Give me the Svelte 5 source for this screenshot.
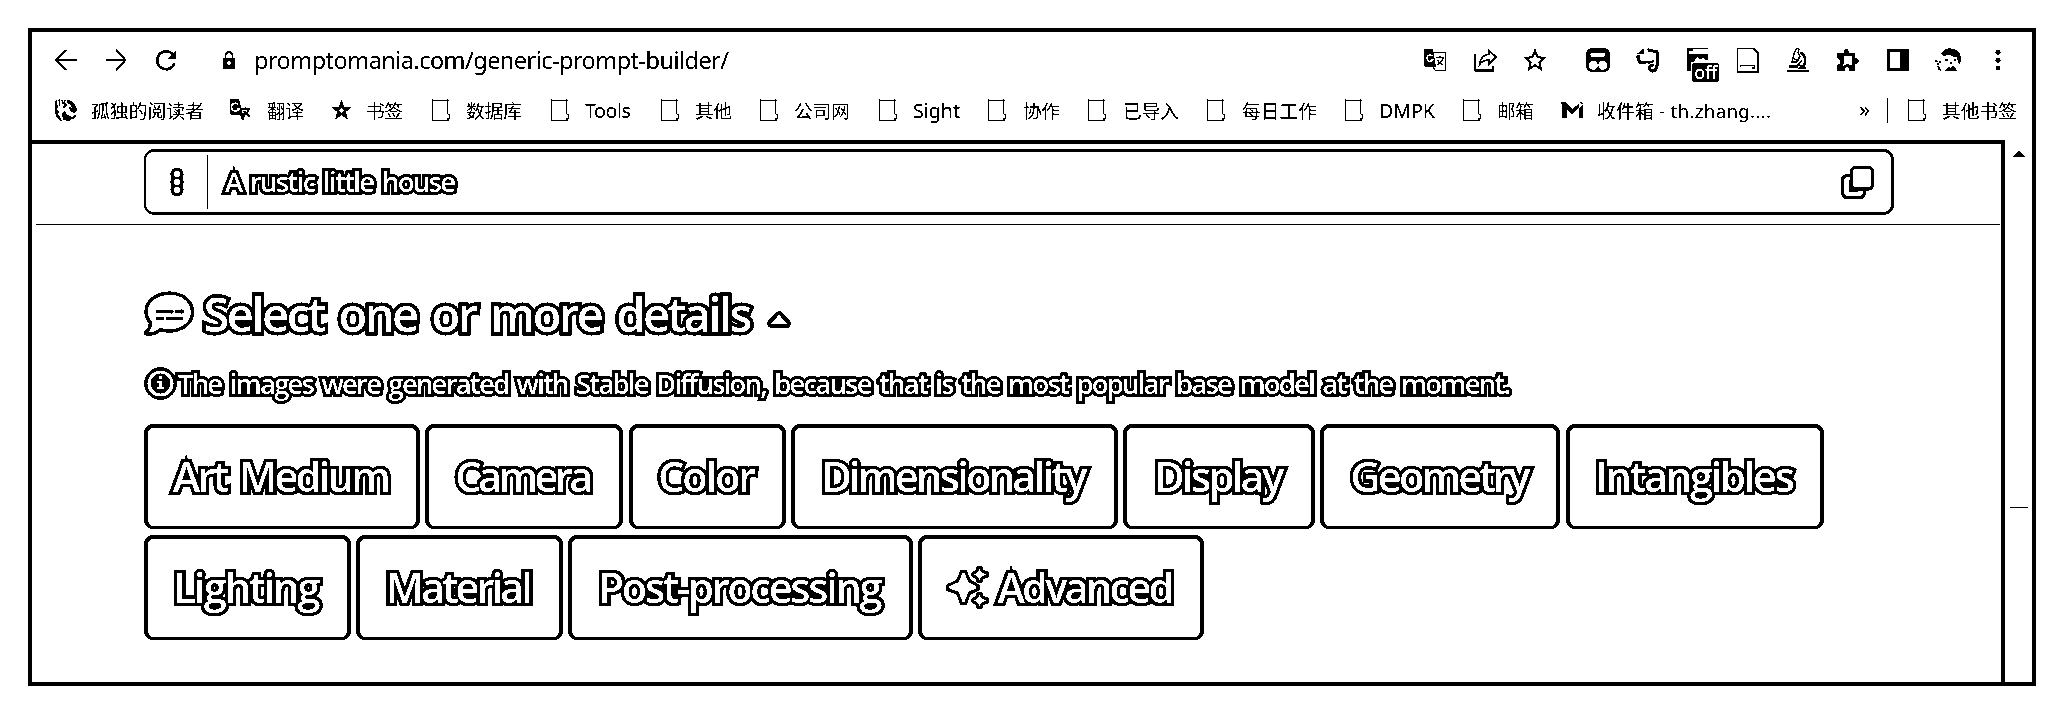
<script>
  // Spread a label over a given width with letter-spacing.
  function fit(node, width) {
    if (!width) return;
    const n = [...node.textContent].length;
    const natural = node.getBoundingClientRect().width;
    const ls = (width - natural) / (n - 1);
    node.style.letterSpacing = ls + 'px';
    node.style.marginRight = -ls + 'px';
  }

  const bookmarks = [
    { icon: 'reader', label: '孤独的阅读者', w: 175, t: 113, pad: 37 },
    { icon: 'translate', label: '翻译', w: 101, t: 37, pad: 38 },
    { icon: 'star', label: '书签', w: 101, t: 37, pad: 36 },
    { icon: 'folder', label: '数据库', w: 119, t: 56, pad: 35 },
    { icon: 'folder', label: 'Tools', w: 110, t: 46, pad: 35, latin: true },
    { icon: 'folder', label: '其他', w: 99, t: 37, pad: 35 },
    { icon: 'folder', label: '公司网', w: 119, t: 56, pad: 35 },
    { icon: 'folder', label: 'Sight', w: 109, t: 47, pad: 35, latin: true },
    { icon: 'folder', label: '协作', w: 100, t: 37, pad: 36 },
    { icon: 'folder', label: '已导入', w: 119, t: 56, pad: 36 },
    { icon: 'folder', label: '每日工作', w: 138, t: 75, pad: 36 },
    { icon: 'folder', label: 'DMPK', w: 118, t: 56, pad: 35, latin: true },
    { icon: 'folder', label: '邮箱', w: 98, t: 37, pad: 35 },
    { icon: 'gmail', label: '收件箱 - th.zhang....', w: 299, t: 174, pad: 37 }
  ];

  const rows = [
    [
      { label: 'Art Medium', w: 276.5, t: 218 },
      { label: 'Camera', w: 198, t: 138 },
      { label: 'Color', w: 157, t: 98 },
      { label: 'Dimensionality', w: 327, t: 266 },
      { label: 'Display', w: 192, t: 130 },
      { label: 'Geometry', w: 240, t: 180 },
      { label: 'Intangibles', w: 258.5, t: 200 }
    ],
    [
      { label: 'Lighting', w: 207, t: 147 },
      { label: 'Material', w: 207, t: 147 },
      { label: 'Post-processing', w: 345, t: 284 },
      { label: 'Advanced', w: 286, t: 177, sparkle: true }
    ]
  ];
</script>

{#snippet folder()}
  <svg width="20" height="24" viewBox="0 0 20 24" fill="none" stroke="#000" shape-rendering="crispEdges">
    <path d="M1.500 2v20.500h16M1 2.500h17M1.500 1v2M16.500 1v15" />
    <path d="M16.500 16.500h2v4h-1v2M16.500 20v2" />
  </svg>
{/snippet}

<svg class="defs" width="0" height="0" aria-hidden="true">
  <filter id="ink" color-interpolation-filters="sRGB" x="0" y="0" width="100%" height="100%">
    <feComponentTransfer>
      <feFuncR type="discrete" tableValues="0 0 0 0 0 1 1 1 1" />
      <feFuncG type="discrete" tableValues="0 0 0 0 0 1 1 1 1" />
      <feFuncB type="discrete" tableValues="0 0 0 0 0 1 1 1 1" />
    </feComponentTransfer>
  </filter>
</svg>

<div class="page">
  <div class="frame">
    <div class="toolbar">
      <div class="nav">
        <span class="cell"><svg width="24" height="24" viewBox="0 0 24 24" fill="none" stroke="#000" stroke-width="2.200"><path d="M12 2 2.500 12 12 22M2.500 12H23" /></svg></span>
        <span class="cell"><svg width="24" height="24" viewBox="0 0 24 24" fill="none" stroke="#000" stroke-width="2"><path d="m12 2 9.500 10L12 22M21.500 12H2" /></svg></span>
        <span class="cell"><svg width="24" height="24" viewBox="0 0 24 24" fill="none" stroke="#000" stroke-width="2.500"><path d="M20.500 15.500A9 9 0 1 1 19 6.500" /><path d="M22.300 2v8.500H13.800z" fill="#000" stroke="none" /></svg></span>
      </div>
      <svg class="lock" width="14" height="20" viewBox="0 0 14 20"><path d="M1 8h12v11H1z" /><path d="M3.500 8.500V5.500a3.500 3.500 0 0 1 7 0v3" fill="none" stroke="#000" stroke-width="1.800" /><circle cx="7" cy="13" r="1.800" fill="#fff" /></svg>
      <span class="url" use:fit={475}>promptomania.com/generic-prompt-builder/</span>
      <div class="actions">
        <span class="cell"><svg width="24" height="24" viewBox="0 0 24 24"><path d="M2 1h8l3 18H2.500L1 17V2z" /><path d="M11 4.500h11.500v18H12l-2-4" fill="none" stroke="#000" /><path d="M9.500 8A3.200 3.200 0 1 0 10 11.500H7.500" fill="none" stroke="#fff" stroke-width="1.500" /><path d="M13 9.500h8M17 7.500v2M20 10c-1 4-4 6-6 7M14.500 12c1 2 3 4 5 5" fill="none" stroke="#000" stroke-width="1.300" /></svg></span>
        <span class="cell"><svg width="26" height="26" viewBox="0 0 26 26" fill="none" stroke="#000"><path d="M3 7v17" stroke-width="1.400" /><path d="M2.500 23.500h18.500V19" stroke-width="2" /><path d="M17 3.500 24 10l-7 7v-4c-4 0-7 1-9.500 4.500C8 12 11 8 17 7z" stroke-width="1.700" /></svg></span>
        <span class="cell"><svg width="24" height="24" viewBox="0 0 24 24" fill="none" stroke="#000" stroke-width="1.900"><path d="m12 2.800 2.600 6.500 7 .5-5.300 4.500 1.700 6.800L12 17.300 6 21.100l1.700-6.800L2.400 9.800l7-.5z" /></svg></span>
        <span class="gap"></span>
        <span class="cell"><svg width="24" height="24" viewBox="0 0 24 24"><rect width="24" height="24" rx="6" /><rect x="4.500" y="4.800" width="14.500" height="4" rx="1.500" fill="#fff" /><circle cx="7.300" cy="17.300" r="4.600" fill="#fff" /><circle cx="16.900" cy="17.300" r="4.600" fill="#fff" /></svg></span>
        <span class="cell"><svg width="24" height="26" viewBox="0 0 24 26" fill="none" stroke="#000"><path d="M11.500 3.200c3-.8 4 1.300 9.500 1.600 1 4 .8 9 0 13.500-.5 4-1.500 5.700-4 5.700-2.500 0-4-1.500-3.500-4 .5-2 2-2 4-1.800" stroke-width="3" /><path d="M2.500 8c-1 3 0 5.500 1.500 7 2 1 4.500 1.200 6-.5" stroke-width="3.200" /><path d="M10 14.500c2 1.500 5 1.500 8-1" stroke-width="2" /><path d="M1 7 7.500 1v6z" fill="#000" stroke="none" /></svg></span>
        <span class="cell ext"><svg width="24" height="26" viewBox="0 0 24 26"><path d="M1 1h6v3H3v3h19v6H9l-1 2H5v9H1z" /><path d="M6 1.500h16" stroke="#000" /><path d="m8 13 4-3 2 2 3-1 4 3z" fill="#fff" /></svg><span class="badge">off</span></span>
        <span class="cell"><svg width="24" height="26" viewBox="0 0 24 26" fill="none" stroke="#000"><path d="M1.500 1v23.500M1 1.500h16.500" /><path d="M17.500 1.500 22 6v19" stroke-width="1.500" /><path d="M1 25h21.500" stroke-width="2" /><path d="M4.500 20V18.500h14v3M15.500 21h3" stroke-width="1.200" /></svg></span>
        <span class="cell"><svg width="24" height="26" viewBox="0 0 24 26" fill="none" stroke="#000"><path d="M1 24h22" stroke-width="2.500" /><path d="M3 19.500h9" stroke-width="2" /><path d="M6 15 8.500 5 11 1l2 1-1 4 2 3-3 6zM8 12l4 1" stroke-width="1.300" /><path d="M14 5.500c6 2.500 7.500 11 1 15.500h5" stroke-width="2.500" /><path d="m16 13-4 5 6 2" stroke-width="1.400" /></svg></span>
        <span class="cell"><svg width="24" height="24" viewBox="0 0 24 24"><path d="M1 5h7V3.500a2 2 0 0 1 4.500-1V5h6.500v5.500h2l2 2.500-2 2.500h-2V23h-6v-3a2.500 2.500 0 0 0-4 0v3H1.500v-6l3-2v-2l-3-2.500z" /><path d="M7.500 8h8.500v9.500l-4.500-1.500-4.500 2 1-4z" fill="#fff" /></svg></span>
        <span class="cell"><svg width="24" height="24" viewBox="0 0 24 24"><path d="M1 1h22v22H1z" /><path d="M4 3.500h10.500v17H4z" fill="#fff" /></svg></span>
        <span class="cell"><svg width="28" height="26" viewBox="0 0 28 26"><path d="M7 7c2-5 9-7 15-4 4 2 6 7 4 14l-2-2-1-5c-3 1-5-2-8-2-2 0-4 1-6 .5z" /><path d="M11 13h3M20 13h2M17 15v2" stroke="#000" stroke-width="1.300" /><path d="M10 24c2-1 3-4 5-4l2 1 2-2c2 1 3 3 4 5z" /><path d="M1 14h2v3h3v-3M3 19l3 2 1 3M4 22h2" fill="none" stroke="#000" stroke-width="1.200" stroke-dasharray="3 1.500" /></svg></span>
        <span class="cell"><svg width="8" height="24" viewBox="0 0 8 24"><circle cx="4" cy="4.300" r="2.500" /><circle cx="4" cy="12.200" r="2.500" /><circle cx="4" cy="20" r="2.500" /></svg></span>
      </div>
    </div>

    <div class="bookmarks">
      {#each bookmarks as b}
        <div class="bm" style="width:{b.w}px">
          <span class="bmicon" style="width:{b.pad}px">
            {#if b.icon === 'folder'}
              {@render folder()}
            {:else if b.icon === 'star'}
              <svg width="22" height="22" viewBox="-1 0 21 22"><path d="m10 .5 2.600 7.300 7.400.3-5.700 5 2 7.400-6.300-4.200-6.300 4.200 2-7.400L0 8.100l7.400-.3z" /><circle cx="10" cy="11.500" r="2.300" fill="#fff" /></svg>
            {:else if b.icon === 'translate'}
              <svg width="24" height="24" viewBox="0 0 24 24"><path d="M1 1h9l4 16H3l-2-2z" /><path d="M9.500 6.500A4 4 0 1 0 10 11H7.500" fill="none" stroke="#fff" stroke-width="1.800" /><path d="M11 15h6l-3 8-2-3z" /><path d="M12.500 11H21M16.500 9v2M20 11c-1 4-3 5-5 6M15 13c1 2 4 4 6 6" fill="none" stroke="#000" stroke-width="1.700" /></svg>
            {:else if b.icon === 'gmail'}
              <svg width="24" height="18" viewBox="0 0 24 18"><path d="M1 1h4l7 7 7-5v4l-7 6-5-4v8H2V5z" /><path d="M19 7l4-3v13h-4z" /><path d="M20 1.500h2v2" fill="none" stroke="#000" /></svg>
            {:else}
              <svg width="24" height="24" viewBox="0 0 24 24"><path d="M1.500 3 3 2v5l1 1-1 4 2 1-1 3 2 3 2 4c-4-1-7-6-7-10zM4.500 2 6 1v6L5 8zM8 15l3-2 2 4 4 1 1 2-3 3-6-1zM13 2c5 0 9 4 10 10l-3 3-4-2-1-4 3 1-2-4-3-1z" /><path d="m8 2 1 4M11 2l-1 3 2 2-3 3M18 21l4-4" fill="none" stroke="#000" stroke-width="1.400" /></svg>
            {/if}
          </span>
          <span class:latin={b.latin} use:fit={b.t}>{b.label}</span>
        </div>
      {/each}
      <span class="more">»</span>
      <span class="vline"></span>
      <div class="bm">
        <span class="bmicon" style="width:35px">{@render folder()}</span>
        <span use:fit={75}>其他书签</span>
      </div>
    </div>

    <div class="body">
      <main>
        <div class="promptbar">
          <div class="prompt">
            <svg class="grip" width="16" height="30" viewBox="0 0 16 30"><path d="M1.500 7a6.500 6.500 0 0 1 13 0l-.2 4 .2 4-.2 4 .2 4a6.500 6.500 0 0 1-13 0l.2-4-.2-4 .2-4z" /><circle cx="8" cy="7" r="3.100" fill="#fff" /><circle cx="8" cy="15" r="3.100" fill="#fff" /><circle cx="8" cy="23" r="3.100" fill="#fff" /></svg>
            <span class="divider"></span>
            <span class="ol med" use:fit={231}>A rustic little house</span>
            <svg class="copy" width="33" height="33" viewBox="0 0 33 33" fill="none" stroke="#000" stroke-width="3.200"><path d="M10 9.500H6.500a5 5 0 0 0-5 5v12a5 5 0 0 0 5 5h12a5 5 0 0 0 5-5V24" /><path d="M9.800 14v10h7" stroke-width="4" /><rect x="10.500" y="1.500" width="21" height="21.500" rx="4" fill="#fff" /></svg>
          </div>
        </div>

        <div class="details">
          <h1>
            <svg width="51" height="46" viewBox="0 0 52 46" fill="none" stroke="#000"><path d="M26 1.800C12 1.800 2 10 2 20.500c0 5 2 8.500 4.500 11.500 0 4-1.500 7.500-4.500 9.500-.8 1.500 0 2.200 1.500 2.200 6 0 10-2 13.500-4.700 2.500.8 6 1.300 9 1.300C39.500 40.300 49.500 32 49.500 21S39.500 1.800 26 1.800z" stroke-width="3.400" /><path d="M12 20.500h17M32 20.500h9M12 27.500h8M23 27.500h17" stroke-width="3.200" /><path d="M28 18.500l2 2-2 2M38 18.500l2 2-2 2" stroke-width="1.200" /></svg>
            <span class="ol big" use:fit={549}>Select one or more details</span>
            <svg class="caret" width="24" height="18" viewBox="0 0 24 18"><path d="M12 5 19 12.500H5z" stroke="#000" stroke-width="9.500" stroke-linejoin="round" /><path d="m12 3.500 8 9.500H4z" fill="#fff" /></svg>
          </h1>
          <p>
            <svg width="33" height="33" viewBox="0 0 33 33"><circle cx="16.500" cy="16.500" r="16.300" /><circle cx="16.500" cy="16.500" r="11.500" fill="none" stroke="#fff" stroke-width="3.200" /><path d="M15 9h3.500v3H15zM13 14h5.500v6H20v2.500h-7V20h2v-3.500h-2z" fill="#fff" /></svg>
            <span class="ol med" use:fit={1333}>The images were generated with Stable Diffusion, because that is the most popular base model at the moment.</span>
          </p>
          {#each rows as row}
            <div class="row">
              {#each row as c}
                <button style="width:{c.w}px">
                  {#if c.sparkle}
                    <svg class="sparkle" width="44" height="44" viewBox="0 0 44 44" fill="#fff" stroke="#000" stroke-width="3" stroke-linejoin="round"><path d="M32 15.500c-1-4-1.500-4.500-5-5.500v-3c3.500-1 4-2 5-5.500h3c1 3.500 1.500 4.500 6.500 5.500v3c-5 1-5.500 1.500-6.500 5.500zM32 41.500c-1-4-1.500-4.500-5-5.500v-3c3.500-1 4-2 5-5.500h3c1 3.500 1.500 4.500 6.500 5.500v3c-5 1-5.500 1.500-6.500 5.500z" /><path d="M15.500 5.500h4l4 9.500 8.500 4.500v4L23.500 27l-4 10.500h-4l-4-10.500L1.500 23.500v-4l10-4.500z" /></svg>
                  {/if}
                  <span class="ol cat" use:fit={c.t}>{c.label}</span>
                </button>
              {/each}
            </div>
          {/each}
        </div>
      </main>
      <div class="scroll">
        <svg width="14" height="8" viewBox="0 0 14 8"><path d="M7 .5 13.800 7H.2z" /></svg>
        <span class="mark"></span>
      </div>
    </div>
  </div>
</div>

<style>
  :global(body) { background: #fff; overflow: hidden; }
  .defs { display: block; }
  .page {
    box-sizing: border-box;
    width: 2064px;
    height: 714px;
    padding: 28px;
    background: #fff;
    color: #000;
    font-family: "Noto Sans", "Noto Sans CJK SC", sans-serif;
    filter: url(#ink);
  }
  .page *, .frame { box-sizing: border-box; }
  .page svg { display: block; flex: none; }
  .page span { white-space: nowrap; }
  .frame {
    width: 2008px;
    height: 658px;
    border: 4px solid #000;
    display: flex;
    flex-direction: column;
  }
  .toolbar {
    display: flex;
    align-items: center;
    height: 56px;
    padding: 0 9px;
  }
  .nav, .actions { display: flex; align-items: center; }
  .actions { margin-left: auto; }
  .cell {
    width: 50px;
    height: 56px;
    display: flex;
    align-items: center;
    justify-content: center;
  }
  .gap { width: 13px; }
  .lock { margin: 0 18px 0 31px; }
  .url { font-size: 23.500px; line-height: 55px; }
  .ext { position: relative; }
  .badge {
    position: absolute;
    left: 19px;
    top: 31px;
    width: 27px;
    height: 19px;
    border-radius: 3px;
    background: #000;
    color: #fff;
    font: 600 18px/18px "Open Sans", sans-serif;
    letter-spacing: -0.500px;
    text-align: center;
  }
  .bookmarks {
    display: flex;
    align-items: center;
    height: 44px;
    padding-left: 22px;
    font-size: 18.700px;
    line-height: 46px;
  }
  .bookmarks .bm > span:last-child { padding-top: 1px; }
  .latin { font-size: 19.600px; }
  .bm { display: flex; align-items: center; height: 44px; }
  .bmicon { display: block; flex: none; }
  .more { width: 27px; font-size: 22px; line-height: 40px; padding-bottom: 4px; }
  .vline { width: 1px; height: 25px; background: #000; margin-right: 19px; margin-left: 1px; }
  .body { flex: 1; display: flex; margin-top: 8px; min-height: 0; }
  main {
    width: 1973px;
    border-top: 4px solid #000;
    border-right: 4px solid #000;
  }
  .promptbar {
    height: 81px;
    margin: 0 1px 0 4px;
    padding: 5px 0 0 108px;
    border-bottom: 1px solid #000;
  }
  .prompt {
    display: flex;
    align-items: center;
    width: 1750px;
    height: 66px;
    border: solid #000;
    border-width: 3px 3px 3px 2px;
    border-radius: 10px;
  }
  .grip { margin-left: 23px; }
  .divider { width: 1px; height: 54px; background: #000; margin: 0 17px 0 22px; }
  .copy { margin-left: auto; margin-right: 17px; }
  .ol {
    font-family: "Open Sans", sans-serif;
    font-weight: 600;
    font-stretch: 93%;
    color: #fff;
    word-spacing: 0.110em;
    -webkit-text-stroke: 6px #000;
    paint-order: stroke fill;
    stroke-linejoin: round;
  }
  .med { font-size: 27.500px; line-height: 40px; }
  .big { font-size: 47px; line-height: 64px; -webkit-text-stroke-width: 7px; }
  .cat { font-size: 41.500px; line-height: 54px; padding-bottom: 2px; -webkit-text-stroke-width: 6.500px; }
  .details { padding: 56px 0 0 111.500px; }
  h1 {
    display: flex;
    align-items: center;
    margin: 0;
    height: 66px;
  }
  h1 .big { margin-left: 9px; }
  .caret { margin-left: 14px; margin-top: 11px; overflow: visible; }
  p {
    display: flex;
    align-items: center;
    margin: 17px 0 21px;
    height: 39px;
  }
  p .med { margin-left: 1.500px; }
  .row { display: flex; gap: 5.300px; height: 105px; margin-bottom: 5.500px; }
  button {
    display: flex;
    align-items: center;
    justify-content: center;
    flex: none;
    padding: 0;
    background: #fff;
    border: solid #000;
    border-width: 4px 4px 3px;
    border-radius: 9px;
  }
  .sparkle { margin-right: 7px; margin-left: -2px; }
  .scroll {
    display: flex;
    flex-direction: column;
    align-items: center;
    padding-top: 10px;
    width: 27px;
  }
  .mark { width: 18px; height: 1px; background: #000; margin-top: 349px; }
</style>
